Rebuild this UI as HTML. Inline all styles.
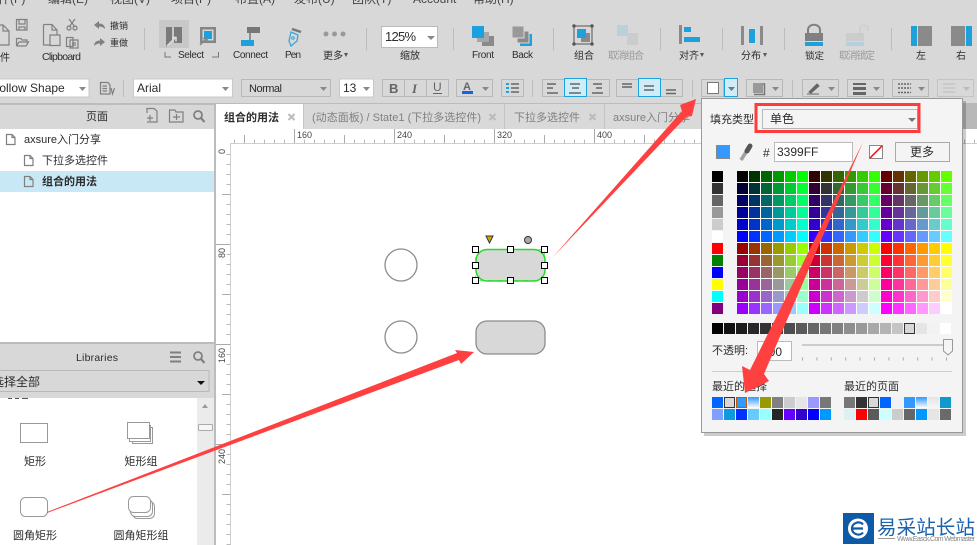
<!DOCTYPE html>
<html lang="zh"><head><meta charset="utf-8"><title>Axure</title>
<style>
html,body{margin:0;padding:0;background:#fff}
body{width:977px;height:545px;overflow:hidden;position:relative}
svg{position:absolute;left:0;top:0}
text{font-family:"Liberation Sans","Noto Sans CJK SC",sans-serif;fill:#2c2c2c;font-size:10px}
.m{font-size:12px;fill:#444}
.c{text-anchor:middle}
.g{fill:#999}
.f{font-size:12px}
.p{font-size:11px}
.t{font-size:11px;fill:#808080}
.r{font-size:9px;fill:#444}
.b{fill:none;stroke:#b8b8b8}
.i{fill:#808080}
.l{fill:none;stroke:#808080;stroke-width:1.2}
#pal{position:absolute;left:737px;top:171px;display:grid;grid-template-columns:repeat(18,11px);grid-auto-rows:11px;gap:1px;background:#fff}
#pal i{display:block}
</style></head><body>
<svg width="977" height="545" viewBox="0 0 977 545">
<rect width="977" height="545" fill="#fff"/>
<rect width="977" height="104" fill="#d8d8d8"/>
<g class="m"><text class="m" x="-14" y="3">文件(F)</text><text class="m" x="48" y="3">编辑(E)</text><text class="m" x="110" y="3">视图(V)</text><text class="m" x="171" y="3">项目(P)</text><text class="m" x="235" y="3">布置(A)</text><text class="m" x="294" y="3">发布(U)</text><text class="m" x="352" y="3">团队(T)</text><text class="m" x="413" y="3">Account</text><text class="m" x="473" y="3">帮助(H)</text></g>

<!-- file group -->
<path class="l" d="M-4 25H3L9 31V45H-4M3 25V31H9"/>
<path class="l" d="M16.500 19.500H27V30H16.500ZM19 19.500V24H25V19.500M19 30V27H25V30"/>
<path class="l" d="M16.500 46V38.500H21L22 40H27V42M16.500 46H26L28.500 42H19L16.500 46"/>
<text x="-10" y="61">文件</text>
<path class="l" d="M43.500 24.500H52L57 30V35M43.500 24.500V45H50M52 24.500V30H57M50 35H60V45.500H50Z"/>
<path class="l" d="M69 19L75 27M75 19L69 27"/><circle class="l" cx="69" cy="28" r="2"/><circle class="l" cx="75" cy="28" r="2"/>
<path class="l" d="M66.500 37.500H73V46.500H66.500ZM70 40H78V48H70ZM72 43H76M72 45H76"/>
<text x="42" y="60" textLength="39" style="font-size:10.500px">Clipboard</text>
<path class="i" d="M94 25L99 21V23.500C102 23.500 105 25 105 29C103 27 101 26.500 99 26.500V29Z"/>
<path class="i" d="M105 42L100 38V40.500C97 40.500 94 42 94 46C96 44 98 43.500 100 43.500V46Z"/>
<text x="110" y="29" style="font-size:9px" textLength="18">撤销</text><text x="110" y="46" style="font-size:9px" textLength="18">重做</text>
<path d="M144.500 28V50M366.500 28V50M453.500 28V50M553.500 28V50M660.500 28V50M722.500 28V50M784.500 28V50M891.500 28V50M123.500 80V97M532.500 80V97M692.500 80V97M792.500 80V97" stroke="#bcbcbc" fill="none"/>

<!-- select -->
<rect x="159" y="20" width="30" height="28" fill="#c8c8c8"/>
<path d="M166 27H172V41L166 47ZM174 27H182V43H174Z" fill="#7a7a7a"/>
<path d="M167 46L175 38M172 37.500H176V41.500" stroke="#dfdfdf" stroke-width="1.500" fill="none"/>
<path d="M200 27H216V43H200ZM202.500 29.500V40.500H213.500V29.500Z" fill="#858585" fill-rule="evenodd"/>
<rect x="204" y="31" width="8" height="8" fill="#1da1dc"/>
<path d="M200 45L206 39M203 38.500H207V42" stroke="#858585" stroke-width="1.500" fill="none"/>
<path d="M165 52V57H171M218.500 52V57H212" stroke="#777" fill="none"/>
<text x="178" y="58" textLength="26">Select</text>

<!-- connect -->
<path d="M247 27H260V33H247ZM241 40H254V46H241Z" fill="#777"/><rect x="241" y="40" width="13" height="6" fill="#1da1dc"/>
<path d="M250 33V40" stroke="#777" stroke-width="1.500"/>
<text x="233" y="58" textLength="35">Connect</text>
<!-- pen -->
<path d="M291 32L298 35L297 41L291 46L289 41Z" fill="none" stroke="#3aa6d8" stroke-width="1.300"/><circle cx="293" cy="38" r="1.300" fill="none" stroke="#3aa6d8"/><path d="M292 29L301 32" stroke="#777" stroke-width="2.500"/>
<text x="285" y="58" textLength="16">Pen</text>
<!-- more -->
<circle cx="326" cy="34" r="2.500" fill="#999"/><circle cx="334.500" cy="34" r="2.500" fill="#999"/><circle cx="343" cy="34" r="2.500" fill="#999"/>
<text x="323" y="59">更多</text><path d="M344 53H348L346 57Z" fill="#555"/>
<!-- zoom -->
<rect x="381.500" y="26.500" width="56" height="21" fill="#fff" stroke="#bbb"/>
<text x="385" y="41" style="font-size:13px" textLength="31">125%</text><path d="M427 36H435L431 40Z" fill="#888"/>
<text x="400" y="59">缩放</text>
<!-- front -->
<rect x="482" y="36" width="12" height="10" fill="#8a8a8a"/><rect x="477" y="32" width="12" height="10" fill="#a6a6a6"/><rect x="472" y="26" width="12" height="12" fill="#1da1dc"/>
<text x="472" y="58" textLength="22">Front</text>
<!-- back -->
<rect x="520" y="34" width="12" height="12" fill="#1da1dc"/><rect x="517" y="31" width="12" height="12" fill="#8a8a8a" stroke="#d8d8d8"/><rect x="512" y="26" width="12" height="12" fill="#999" stroke="#d8d8d8"/>
<text x="512" y="58" textLength="21">Back</text>
<!-- group -->
<rect x="574" y="26" width="18" height="18" fill="none" stroke="#555"/><circle cx="574" cy="26" r="1.700" fill="#555"/><circle cx="592" cy="26" r="1.700" fill="#555"/><circle cx="574" cy="44" r="1.700" fill="#555"/><circle cx="592" cy="44" r="1.700" fill="#555"/>
<rect x="581" y="33" width="9" height="9" fill="#8a8a8a"/><rect x="577" y="29" width="9" height="9" fill="#1da1dc"/>
<text x="574" y="59">组合</text>
<rect x="617" y="25" width="11" height="11" fill="#bcd0da"/><rect x="627" y="33" width="11" height="12" fill="#cccccc"/>
<text class="g" x="608" y="59" textLength="36">取消组合</text>
<!-- align -->
<rect x="679" y="25" width="3" height="19" fill="#8a8a8a"/><rect x="684" y="27" width="7" height="5" fill="#1da1dc"/><rect x="684" y="37" width="16" height="5" fill="#1da1dc"/>
<text x="679" y="59">对齐</text><path d="M700 53H704L702 57Z" fill="#555"/>
<!-- dist -->
<rect x="741" y="26" width="3" height="19" fill="#8a8a8a"/><rect x="760" y="26" width="3" height="19" fill="#8a8a8a"/><rect x="749" y="29" width="6" height="14" fill="#1da1dc"/>
<text x="741" y="59">分布</text><path d="M763 53H767L765 57Z" fill="#555"/>
<!-- lock -->
<path d="M808 33V30C808 23 820 23 820 30V33" fill="none" stroke="#808080" stroke-width="2"/><rect x="805" y="33" width="18" height="8" fill="#808080"/><rect x="805" y="42" width="18" height="4" fill="#1da1dc"/>
<text x="805" y="59" style="font-size:9.500px">锁定</text>
<path d="M860 33V29C860 24 868 24 868 29V31" fill="none" stroke="#d0d0d0" stroke-width="2"/><rect x="846" y="33" width="18" height="8" fill="#cccccc"/><rect x="846" y="42" width="18" height="4" fill="#b4d0de"/>
<text class="g" x="839" y="59" textLength="36">取消锁定</text>
<!-- left right -->
<rect x="911" y="26" width="6" height="20" fill="#1da1dc"/><rect x="918" y="26" width="14" height="20" fill="#8a8a8a"/>
<text x="916" y="59">左</text>
<rect x="951" y="26" width="14" height="20" fill="#8a8a8a"/><rect x="966" y="26" width="6" height="20" fill="#1da1dc"/>
<text x="956" y="59">右</text>

<!-- row 2 -->
<rect x="-2" y="79" width="91" height="18" fill="#fff" stroke="#c8c8c8"/><text class="f" x="-8" y="92">Follow Shape</text><path d="M79 87H86L82.500 91Z" fill="#888"/>
<path class="l" d="M100.500 82.500H108L110 85V94H100.500ZM102.500 86H107M102.500 88.500H107M102.500 91H107M111 88L112.500 94L114.500 88" stroke="#667"/>
<rect x="133.500" y="79" width="99" height="18" fill="#fff" stroke="#c8c8c8"/><text class="f" x="137" y="92">Arial</text><path d="M222 87H229L225.500 91Z" fill="#888"/>
<rect class="b" x="241.500" y="79.500" width="89" height="17"/><text class="f" x="249" y="92" textLength="33" style="font-size:11px">Normal</text><path d="M320 87H327L323.500 91Z" fill="#888"/>
<rect x="339.500" y="79" width="34" height="18" fill="#fff" stroke="#c8c8c8"/><text class="f" x="343" y="92">13</text><path d="M363 87H370L366.500 91Z" fill="#888"/>
<rect class="b" x="382.500" y="79.500" width="66" height="17"/><path class="b" d="M404.500 79.500V96.500M426.500 79.500V96.500"/>
<text x="389" y="93" style="font-size:13px;font-weight:bold;fill:#666">B</text><text x="412" y="93" style="font-size:13px;font-style:italic;font-family:'Liberation Serif';fill:#666;font-weight:bold">I</text><text x="433" y="91" style="font-size:12px;fill:#666">U</text><path d="M433 93.500H442" stroke="#666"/>
<rect class="b" x="456.500" y="79.500" width="36" height="17"/><text x="463" y="90" style="font-size:11px;font-weight:bold;fill:#666">A</text><rect x="462" y="91" width="11" height="3" fill="#1463e0"/><path d="M482 87H489L485.500 91Z" fill="#888"/>
<rect class="b" x="501.500" y="79.500" width="22" height="17"/><path d="M506 84H509M506 88H509M506 92H509" stroke="#1da1dc" stroke-width="2"/><path d="M511 84H519M511 88H519M511 92H519" stroke="#666" stroke-width="1.500"/>
<rect class="b" x="542.500" y="79.500" width="67" height="17"/><rect x="564.500" y="78.500" width="22" height="18" fill="#cfecf9" stroke="#1da1dc"/>
<path d="M547 84H556M547 88H553M547 93H558M570 84H580M572 88H579M569 93H581M593 84H602M596 88H602M592 93H603" stroke="#666" stroke-width="1.500"/>
<rect class="b" x="616.500" y="79.500" width="66" height="17"/><rect x="638.500" y="78.500" width="22" height="18" fill="#cfecf9" stroke="#1da1dc"/>
<path d="M622 84H632M622 87H632M644 86H654M644 90H654M666 90H676M666 93.500H676" stroke="#666" stroke-width="1.500"/>
<rect class="b" x="701.500" y="79.500" width="22" height="17"/><rect x="707.500" y="82.500" width="11" height="11" fill="#fff" stroke="#777"/>
<rect x="724.500" y="78.500" width="13" height="18" fill="#cfecf9" stroke="#1da1dc"/><path d="M728 87H735L731.500 91Z" fill="#777"/>
<rect class="b" x="746.500" y="79.500" width="36" height="17"/><rect x="753" y="83" width="10" height="10" fill="#999"/><path d="M763 84H764.500V94.500H754" fill="none" stroke="#777" stroke-width="1.500"/><path d="M772 87H779L775.500 91Z" fill="#888"/>
<rect class="b" x="802.500" y="79.500" width="36" height="17"/><path d="M809 92L817 84L819 86L811 93ZM807 94H819" fill="#666" stroke="#666"/><path d="M828 87H835L831.500 91Z" fill="#888"/>
<rect class="b" x="847.500" y="79.500" width="36" height="17"/><rect x="853" y="83" width="13" height="2" fill="#666"/><rect x="853" y="87" width="13" height="3" fill="#666"/><rect x="853" y="92" width="13" height="3" fill="#666"/><path d="M873 87H880L876.500 91Z" fill="#888"/>
<rect class="b" x="892.500" y="79.500" width="36" height="17"/><path d="M898 84H911M898 88H911M898 92.500H911" stroke="#666" stroke-width="1.500" stroke-dasharray="2 1"/><path d="M918 87H925L921.500 91Z" fill="#888"/>
<rect x="937.500" y="79.500" width="36" height="17" fill="none" stroke="#c4c4c4"/><path d="M943 84H955M943 88H955M943 92H955" stroke="#bbb"/><path d="M963 87H970L966.500 91Z" fill="#bbb"/>

<!-- panels -->
<rect y="103" width="977" height="2" fill="#bcbcbc"/>
<rect y="105" width="214" height="24" fill="#d8d8d8"/>
<rect x="214" y="103" width="2" height="442" fill="#bcbcbc"/>
<text x="86" y="120" style="font-size:11px">页面</text>
<path class="l" d="M147 113V108.500H154L157 111V122H147M147 118H153M150 115V121"/>
<path class="l" d="M169.500 122V110H175L176 112H183V122ZM173 117H180M176.500 114V120"/>
<circle cx="198" cy="115" r="4" fill="none" stroke="#808080" stroke-width="1.800"/><path d="M201 118L204.500 122" stroke="#808080" stroke-width="2.200"/>
<rect y="171" width="214" height="21" fill="#c9e8f6"/>
<path class="l" d="M6.500 134.500H12L15 137.500V144.500H6.500ZM12 134.500V137.500H15" stroke="#666"/>
<path class="l" d="M24.500 155.500H30L33 158.500V165.500H24.500ZM30 155.500V158.500H33" stroke="#666"/>
<path class="l" d="M24.500 176.500H30L33 179.500V186.500H24.500ZM30 176.500V179.500H33" stroke="#666"/>
<text class="p" x="24" y="143">axsure入门分享</text><text class="p" x="42" y="164">下拉多选控件</text><text class="p" x="42" y="185" style="font-weight:bold">组合的用法</text>

<!-- tabs -->
<rect x="216" y="104" width="761" height="25" fill="#d9d9d9"/>
<rect x="963" y="103" width="14" height="26" fill="#b8b8b8"/>
<rect x="216" y="104" width="87" height="25" fill="#fff"/>
<path d="M303.500 104V129M504.500 104V129M604.500 104V129" stroke="#c4c4c4" fill="none"/>
<text x="224" y="121" style="font-size:11px;font-weight:bold">组合的用法</text>
<path d="M288.500 114L294.500 120M294.500 114L288.500 120M489.500 114L495.500 120M495.500 114L489.500 120M589.500 114L595.500 120M595.500 114L589.500 120" stroke="#bbb" stroke-width="2"/>
<text class="t" x="312" y="121" textLength="169">(动态面板) / State1 (下拉多选控件)</text>
<text class="t" x="514" y="121">下拉多选控件</text>
<text class="t" x="613" y="121">axsure入门分享</text>

<!-- rulers -->
<path d="M230.500 144V545M230 143.500H977" stroke="#cfcfcf"/>
<path d="M234 141.500H977" stroke="#bbb" stroke-width="4" stroke-dasharray="1 9"/>
<path d="M228.500 154V545" stroke="#bbb" stroke-width="4" stroke-dasharray="1 9"/>
<path d="M294.500 129V143M394.500 129V143M494.500 129V143M594.500 129V143M244.500 135V143M344.500 135V143M444.500 135V143M544.500 135V143M644.500 135V143" stroke="#aaa"/>
<path d="M216 244.500H230M216 344.500H230M216 444.500H230M222 194.500H230M222 294.500H230M222 394.500H230M222 494.500H230" stroke="#aaa"/>
<text class="r" x="297" y="138">160</text><text class="r" x="397" y="138">240</text><text class="r" x="497" y="138">320</text><text class="r" x="597" y="138">400</text>
<text class="r" transform="rotate(-90 225 154)" x="225" y="154">0</text>
<text class="r" transform="rotate(-90 225 258)" x="225" y="258">80</text>
<text class="r" transform="rotate(-90 225 363)" x="225" y="363">160</text>
<text class="r" transform="rotate(-90 225 464)" x="225" y="464">240</text>

<!-- canvas -->
<circle cx="401" cy="265" r="16" fill="#fff" stroke="#8c8c8c" stroke-width="1.300"/>
<circle cx="401" cy="337" r="16" fill="#fff" stroke="#8c8c8c" stroke-width="1.300"/>
<rect x="476" y="321" width="69" height="33" rx="11" fill="#d8d8d8" stroke="#8c8c8c" stroke-width="1.300"/>
<rect x="476" y="249.500" width="69" height="31.500" rx="11" fill="#d8d8d8" stroke="#22dd22" stroke-width="1.500"/>
<path d="M475.500 249.500H544.500V280.500H475.500Z" fill="none" stroke="#22dd22" stroke-dasharray="3 6" stroke-opacity=".6"/>
<g fill="#fff" stroke="#000"><rect x="472.500" y="246.500" width="6" height="6"/><rect x="507.500" y="246.500" width="6" height="6"/><rect x="541.500" y="246.500" width="6" height="6"/><rect x="472.500" y="262.500" width="6" height="6"/><rect x="541.500" y="262.500" width="6" height="6"/><rect x="472.500" y="277.500" width="6" height="6"/><rect x="507.500" y="277.500" width="6" height="6"/><rect x="541.500" y="277.500" width="6" height="6"/></g>
<path d="M486 236H493L489.500 243Z" fill="#d4a800" stroke="#333"/>
<circle cx="528" cy="240" r="3.500" fill="#aaa" stroke="#333"/>

<!-- libraries -->
<rect y="342" width="214" height="2" fill="#bcbcbc"/>
<rect y="344" width="214" height="54" fill="#d8d8d8"/>
<text x="76" y="361" style="font-size:10.500px" textLength="42">Libraries</text>
<path d="M170 352.500H181M170 357H181M170 361.500H181" stroke="#808080" stroke-width="2"/>
<circle cx="198" cy="356" r="4" fill="none" stroke="#808080" stroke-width="1.800"/><path d="M201 359L204.500 363" stroke="#808080" stroke-width="2.200"/>
<rect x="-2" y="370.500" width="211" height="21" fill="none" stroke="#b8b8b8"/>
<text class="f" x="-8" y="386">选择全部</text><path d="M197 381H205L201 385Z" fill="#111"/>
<path d="M8 398.500H12M15 398.500H19M22 398.500H28" stroke="#555"/>
<rect x="197" y="398" width="17" height="147" fill="#ebebeb"/>
<path d="M205 404L208 408H202Z" fill="#999"/>
<rect x="198.500" y="424.500" width="14" height="6" rx="1" fill="#f6f6f6" stroke="#aaa"/>
<rect x="20.500" y="423.500" width="27" height="19" fill="#fff" stroke="#999"/>
<rect x="132.500" y="427.500" width="20" height="16" fill="#fff" stroke="#999"/><rect x="129.500" y="425.500" width="21" height="16" fill="#fff" stroke="#999"/><rect x="127.500" y="422.500" width="22" height="16" fill="#fff" stroke="#999"/>
<text class="c p" x="35" y="465">矩形</text><text class="c p" x="141" y="465">矩形组</text>
<rect x="20.500" y="497.500" width="27" height="19" rx="5" fill="#fff" stroke="#999"/>
<rect x="132.500" y="501.500" width="22" height="17" rx="5" fill="#fff" stroke="#999"/><rect x="130.500" y="499.500" width="22" height="17" rx="5" fill="#fff" stroke="#999"/><rect x="128.500" y="496.500" width="22" height="16" rx="5" fill="#fff" stroke="#999"/>
<text class="c p" x="35" y="539">圆角矩形</text><text class="c p" x="141" y="539">圆角矩形组</text>

<!-- colour panel -->
<rect x="704" y="101" width="262" height="335" fill="#000" opacity=".2"/>
<rect x="701.500" y="98.500" width="261" height="334" fill="#f4f4f4" stroke="#999"/>
<text class="p" x="710" y="123">填充类型</text>
<rect x="762.500" y="109.500" width="155" height="19" fill="#f4f4f4" stroke="#b8b8b8"/>
<text class="f" x="770" y="123">单色</text><path d="M908 118H916L912 122Z" fill="#777"/>
<rect x="756" y="104.500" width="163" height="27" fill="none" stroke="#ff3b3b" stroke-width="3"/>
<rect x="716.500" y="145.500" width="13" height="13" fill="#3399ff" stroke="#888"/>
<path d="M741 160L748 149" stroke="#a0a0a0" stroke-width="3.500"/><path d="M747 151L750 146" stroke="#555" stroke-width="5" stroke-linecap="round"/>
<text class="f" x="763" y="157">#</text>
<rect x="774.500" y="142.500" width="78" height="19" fill="#fff" stroke="#bbb"/>
<text class="f" x="777" y="156">3399FF</text>
<rect x="869.500" y="145.500" width="13" height="13" fill="#fff" stroke="#888"/><path d="M870 158L882 146" stroke="#f00" stroke-width="1.500"/>
<rect x="895.500" y="142.500" width="54" height="19" fill="#f4f4f4" stroke="#aaa"/>
<text class="c f" x="922" y="156">更多</text>
<g>
<rect x="712" y="171" width="11" height="11" fill="#000"/><rect x="712" y="183" width="11" height="11" fill="#333"/><rect x="712" y="195" width="11" height="11" fill="#666"/><rect x="712" y="207" width="11" height="11" fill="#999"/><rect x="712" y="219" width="11" height="11" fill="#ccc"/><rect x="712" y="231" width="11" height="11" fill="#fff"/><rect x="712" y="243" width="11" height="11" fill="#f00"/><rect x="712" y="255" width="11" height="11" fill="#008000"/><rect x="712" y="267" width="11" height="11" fill="#00f"/><rect x="712" y="279" width="11" height="11" fill="#ff0"/><rect x="712" y="291" width="11" height="11" fill="#0ff"/><rect x="712" y="303" width="11" height="11" fill="#800080"/>
</g>
<g>
<rect x="712" y="323" width="11" height="11" fill="#000"/><rect x="724" y="323" width="11" height="11" fill="#111"/><rect x="736" y="323" width="11" height="11" fill="#1c1c1c"/><rect x="748" y="323" width="11" height="11" fill="#282828"/><rect x="760" y="323" width="11" height="11" fill="#333"/><rect x="772" y="323" width="11" height="11" fill="#3e3e3e"/><rect x="784" y="323" width="11" height="11" fill="#4d4d4d"/><rect x="796" y="323" width="11" height="11" fill="#5a5a5a"/><rect x="808" y="323" width="11" height="11" fill="#666"/><rect x="820" y="323" width="11" height="11" fill="#777"/><rect x="832" y="323" width="11" height="11" fill="#808080"/><rect x="844" y="323" width="11" height="11" fill="#8e8e8e"/><rect x="856" y="323" width="11" height="11" fill="#999"/><rect x="868" y="323" width="11" height="11" fill="#a8a8a8"/><rect x="880" y="323" width="11" height="11" fill="#b4b4b4"/><rect x="892" y="323" width="11" height="11" fill="#c5c5c5"/><rect x="904.500" y="323.500" width="10" height="10" fill="#d8d8d8" stroke="#333"/><rect x="916" y="323" width="11" height="11" fill="#e5e5e5"/><rect x="928" y="323" width="11" height="11" fill="#f2f2f2"/><rect x="940" y="323" width="11" height="11" fill="#fff"/>
</g>
<text class="p" x="712" y="354">不透明:</text>
<rect x="757.500" y="341.500" width="34" height="19" fill="#fff" stroke="#bbb"/><text class="f" x="762" y="356">100</text>
<path d="M802 345H950" stroke="#ccc" stroke-width="2"/>
<path d="M802 359H950" stroke="#aaa" stroke-width="3" stroke-dasharray="1 13.400"/>
<path d="M943.500 339.500H952.500V351L948 355L943.500 351Z" fill="#f4f4f4" stroke="#999"/>
<path d="M712 371.500H952" stroke="#ccc"/>
<text class="p" x="712" y="390">最近的选择</text><text class="p" x="844" y="390">最近的页面</text>
<defs><linearGradient id="gr" x1="0" y1="0" x2="0" y2="1"><stop offset="0" stop-color="#3399ff"/><stop offset="1" stop-color="#fff"/></linearGradient><linearGradient id="gg" x1="0" y1="0" x2="0" y2="1"><stop offset="0" stop-color="#e4e4e4"/><stop offset="1" stop-color="#f6f6f6"/></linearGradient></defs>
<g>
<rect x="712" y="397" width="11" height="11" fill="#06f"/><rect x="724.500" y="397.500" width="10" height="10" fill="#d8d8d8" stroke="#333"/><rect x="736.500" y="397.500" width="10" height="10" fill="#3399ff" stroke="#c05a00"/><rect x="748" y="397" width="11" height="11" fill="url(#gr)"/><rect x="760" y="397" width="11" height="11" fill="#990"/><rect x="772" y="397" width="11" height="11" fill="#808080"/><rect x="784" y="397" width="11" height="11" fill="#ccc"/><rect x="796" y="397" width="11" height="11" fill="#e5e5e5"/><rect x="808" y="397" width="11" height="11" fill="#99f"/><rect x="820" y="397" width="11" height="11" fill="#777"/>
<rect x="712" y="409" width="11" height="11" fill="#80a0ff"/><rect x="724" y="409" width="11" height="11" fill="#1199dd"/><rect x="736" y="409" width="11" height="11" fill="#03f"/><rect x="748" y="409" width="11" height="11" fill="#6cf"/><rect x="760" y="409" width="11" height="11" fill="#9ff"/><rect x="772" y="409" width="11" height="11" fill="#262626"/><rect x="784" y="409" width="11" height="11" fill="#60f"/><rect x="796" y="409" width="11" height="11" fill="#30c"/><rect x="808" y="409" width="11" height="11" fill="#00f"/><rect x="820" y="409" width="11" height="11" fill="#09f"/>
<rect x="844" y="397" width="11" height="11" fill="#777"/><rect x="856" y="397" width="11" height="11" fill="#333"/><rect x="868.500" y="397.500" width="10" height="10" fill="#d8d8d8" stroke="#333"/><rect x="880" y="397" width="11" height="11" fill="#06f"/><rect x="892" y="397" width="11" height="11" fill="#f2f2f2"/><rect x="904" y="397" width="11" height="11" fill="#39f"/><rect x="916" y="397" width="11" height="11" fill="url(#gr)"/><rect x="928" y="397" width="11" height="11" fill="url(#gg)"/><rect x="940" y="397" width="11" height="11" fill="#1199cc"/>
<rect x="844" y="409" width="11" height="11" fill="#dff0f5"/><rect x="856" y="409" width="11" height="11" fill="#f00"/><rect x="868" y="409" width="11" height="11" fill="#5a5a5a"/><rect x="880" y="409" width="11" height="11" fill="#cff"/><rect x="892" y="409" width="11" height="11" fill="#ccc"/><rect x="904" y="409" width="11" height="11" fill="#666"/><rect x="916" y="409" width="11" height="11" fill="#09f"/><rect x="928" y="409" width="11" height="11" fill="#e5e5e5"/><rect x="940" y="409" width="11" height="11" fill="#6a6a6a"/>
</g>
</svg>

<div id="pal">
<i style=background:#000></i><i style=background:#030></i><i style=background:#060></i><i style=background:#090></i><i style=background:#0c0></i><i style=background:#0f0></i><i style=background:#300></i><i style=background:#330></i><i style=background:#360></i><i style=background:#390></i><i style=background:#3c0></i><i style=background:#3f0></i><i style=background:#600></i><i style=background:#630></i><i style=background:#660></i><i style=background:#690></i><i style=background:#6c0></i><i style=background:#6f0></i>
<i style=background:#003></i><i style=background:#033></i><i style=background:#063></i><i style=background:#093></i><i style=background:#0c3></i><i style=background:#0f3></i><i style=background:#303></i><i style=background:#333></i><i style=background:#363></i><i style=background:#393></i><i style=background:#3c3></i><i style=background:#3f3></i><i style=background:#603></i><i style=background:#633></i><i style=background:#663></i><i style=background:#693></i><i style=background:#6c3></i><i style=background:#6f3></i>
<i style=background:#006></i><i style=background:#036></i><i style=background:#066></i><i style=background:#096></i><i style=background:#0c6></i><i style=background:#0f6></i><i style=background:#306></i><i style=background:#336></i><i style=background:#366></i><i style=background:#396></i><i style=background:#3c6></i><i style=background:#3f6></i><i style=background:#606></i><i style=background:#636></i><i style=background:#666></i><i style=background:#696></i><i style=background:#6c6></i><i style=background:#6f6></i>
<i style=background:#009></i><i style=background:#039></i><i style=background:#069></i><i style=background:#099></i><i style=background:#0c9></i><i style=background:#0f9></i><i style=background:#309></i><i style=background:#339></i><i style=background:#369></i><i style=background:#399></i><i style=background:#3c9></i><i style=background:#3f9></i><i style=background:#609></i><i style=background:#639></i><i style=background:#669></i><i style=background:#699></i><i style=background:#6c9></i><i style=background:#6f9></i>
<i style=background:#00c></i><i style=background:#03c></i><i style=background:#06c></i><i style=background:#09c></i><i style=background:#0cc></i><i style=background:#0fc></i><i style=background:#30c></i><i style=background:#33c></i><i style=background:#36c></i><i style=background:#39c></i><i style=background:#3cc></i><i style=background:#3fc></i><i style=background:#60c></i><i style=background:#63c></i><i style=background:#66c></i><i style=background:#69c></i><i style=background:#6cc></i><i style=background:#6fc></i>
<i style=background:#00f></i><i style=background:#03f></i><i style=background:#06f></i><i style=background:#09f></i><i style=background:#0cf></i><i style=background:#0ff></i><i style=background:#30f></i><i style=background:#33f></i><i style=background:#36f></i><i style=background:#39f></i><i style=background:#3cf></i><i style=background:#3ff></i><i style=background:#60f></i><i style=background:#63f></i><i style=background:#66f></i><i style=background:#69f></i><i style=background:#6cf></i><i style=background:#6ff></i>
<i style=background:#900></i><i style=background:#930></i><i style=background:#960></i><i style=background:#990></i><i style=background:#9c0></i><i style=background:#9f0></i><i style=background:#c00></i><i style=background:#c30></i><i style=background:#c60></i><i style=background:#c90></i><i style=background:#cc0></i><i style=background:#cf0></i><i style=background:#f00></i><i style=background:#f30></i><i style=background:#f60></i><i style=background:#f90></i><i style=background:#fc0></i><i style=background:#ff0></i>
<i style=background:#903></i><i style=background:#933></i><i style=background:#963></i><i style=background:#993></i><i style=background:#9c3></i><i style=background:#9f3></i><i style=background:#c03></i><i style=background:#c33></i><i style=background:#c63></i><i style=background:#c93></i><i style=background:#cc3></i><i style=background:#cf3></i><i style=background:#f03></i><i style=background:#f33></i><i style=background:#f63></i><i style=background:#f93></i><i style=background:#fc3></i><i style=background:#ff3></i>
<i style=background:#906></i><i style=background:#936></i><i style=background:#966></i><i style=background:#996></i><i style=background:#9c6></i><i style=background:#9f6></i><i style=background:#c06></i><i style=background:#c36></i><i style=background:#c66></i><i style=background:#c96></i><i style=background:#cc6></i><i style=background:#cf6></i><i style=background:#f06></i><i style=background:#f36></i><i style=background:#f66></i><i style=background:#f96></i><i style=background:#fc6></i><i style=background:#ff6></i>
<i style=background:#909></i><i style=background:#939></i><i style=background:#969></i><i style=background:#999></i><i style=background:#9c9></i><i style=background:#9f9></i><i style=background:#c09></i><i style=background:#c39></i><i style=background:#c69></i><i style=background:#c99></i><i style=background:#cc9></i><i style=background:#cf9></i><i style=background:#f09></i><i style=background:#f39></i><i style=background:#f69></i><i style=background:#f99></i><i style=background:#fc9></i><i style=background:#ff9></i>
<i style=background:#90c></i><i style=background:#93c></i><i style=background:#96c></i><i style=background:#99c></i><i style=background:#9cc></i><i style=background:#9fc></i><i style=background:#c0c></i><i style=background:#c3c></i><i style=background:#c6c></i><i style=background:#c9c></i><i style=background:#ccc></i><i style=background:#cfc></i><i style=background:#f0c></i><i style=background:#f3c></i><i style=background:#f6c></i><i style=background:#f9c></i><i style=background:#fcc></i><i style=background:#ffc></i>
<i style=background:#90f></i><i style=background:#93f></i><i style=background:#96f></i><i style=background:#99f></i><i style=background:#9cf></i><i style=background:#9ff></i><i style=background:#c0f></i><i style=background:#c3f></i><i style=background:#c6f></i><i style=background:#c9f></i><i style=background:#ccf></i><i style=background:#cff></i><i style=background:#f0f></i><i style=background:#f3f></i><i style=background:#f6f></i><i style=background:#f9f></i><i style=background:#fcf></i><i style=background:#fff></i>
</div>

<svg width="977" height="545" viewBox="0 0 977 545">
<!-- arrows -->
<g fill="#ff4040">
<path d="M552 258L682 111L680 105L696 99L692 116L686 117Z"/>
<path d="M863 142L764 374L769 381L745 393L742 366L750 370Z"/>
<path d="M47 512L457 353L455 350L474 352L461 364L459 360L47 513Z"/>
</g>
<!-- watermark -->
<rect x="843" y="513" width="134" height="32" fill="#fff"/>
<rect x="843" y="513" width="31" height="31" fill="#0f5aa6"/>
<circle cx="858" cy="528.500" r="10" fill="#fff"/>
<path d="M853 528.500H863M863 524.500C860 520.500 852 522.500 852 528.500C852 534.500 860 536.500 863 532.500" fill="none" stroke="#0f5aa6" stroke-width="2.200"/>
<text x="877" y="534" style="font-size:19.500px;fill:#1a62ad" textLength="98">易采站长站</text>
<path d="M878 538.500H895" stroke="#999"/>
<text x="897" y="541" style="font-size:7px;fill:#888" textLength="78">Www.Easck.Com  Webmaster</text>
</svg>
</body></html>
